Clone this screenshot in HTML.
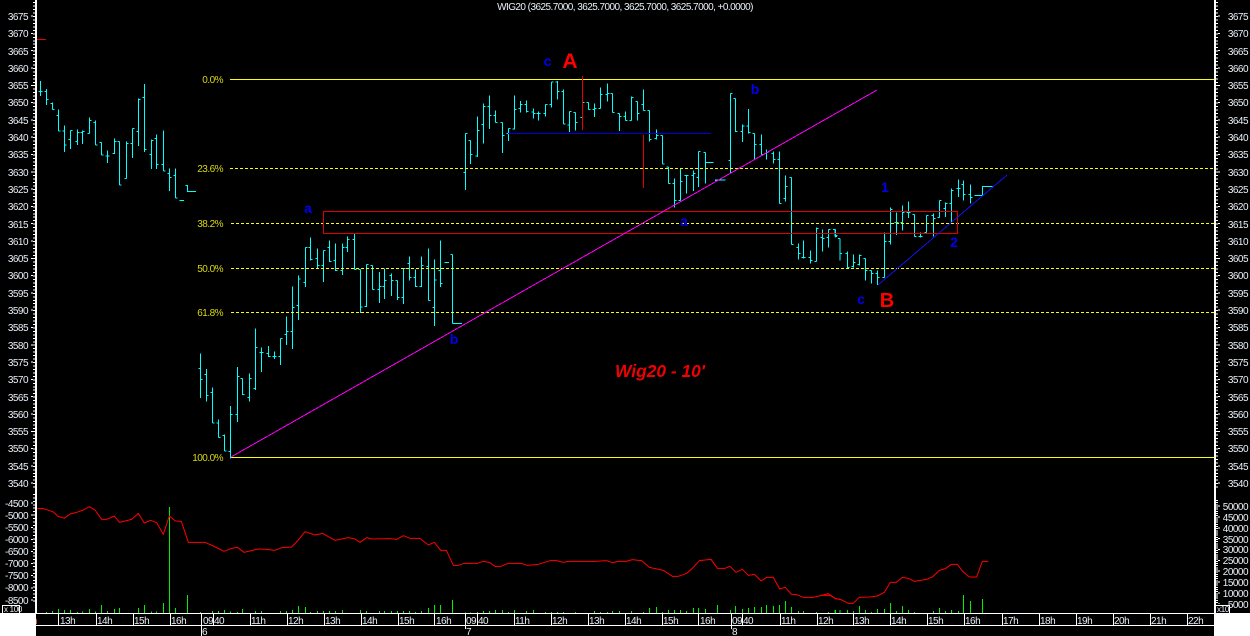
<!DOCTYPE html>
<html><head><meta charset="utf-8"><title>WIG20</title>
<style>
html,body{margin:0;padding:0;background:#000;width:1250px;height:636px;overflow:hidden}
svg{display:block}
text{font-family:"Liberation Sans",Arial,sans-serif}
.ax text,.tm text{font-size:10px;letter-spacing:-.52px;fill:#eaf1f8}
.ax .l{text-anchor:end}
.fib text{font-size:10px;letter-spacing:-.52px;fill:#d8d810;text-anchor:end}
.an text{font-weight:bold;text-anchor:middle;font-size:14px;fill:#0000f0}
</style></head><body>
<svg width="1250" height="636" viewBox="0 0 1250 636" xmlns="http://www.w3.org/2000/svg">
<rect width="1250" height="636" fill="#000"/>

<!-- price bars -->
<g fill="none" stroke="#00ffff" stroke-width="3" shape-rendering="crispEdges">
<g transform="translate(.17,.17) scale(.33333)"><path d="M121 243V288M121 274h-6M121 274h6M139 267V315M139 274h-6M139 298h6M157 307V328M157 310h-6M157 328h6M175 328V392M175 346h-6M175 392h6M193 376V455M193 392h-6M193 434h6M211 391V447M211 418h-6M211 391h6M232 388V435M232 424h-6M232 397h6M247 391V432M247 397h-6M247 394h6M268 352V400M268 400h-6M268 361h6M286 361V434M286 367h-6M286 434h6M304 427V464M304 427h-6M304 464h6M322 451V489M322 467h-6M322 467h6M343 415V461M343 460h-6M343 424h6M358 424V554M358 424h-6M358 554h6M379 424V535M379 535h-6M379 430h6M397 385V473M397 430h-6M397 385h6M415 295V437M415 394h-6M415 298h6M433 252V455M433 292h-6M433 448h6M454 418V507M454 463h-6M454 421h6M469 403V507M469 415h-6M469 493h6M490 391V513M490 493h-6M490 512h6M508 505V572M508 520h-6M508 532h6M526 505V593M526 526h-6M526 593h6M538 601H552M556 556H562V574H588"/></g>
<g transform="translate(180.17,200.17) scale(.33333)"><path d="M61 460V594M61 505h-6M61 538h6M79 507V604M79 523h-6M79 586h6M97 562V668M97 577h-6M97 668h6M115 658V712M115 668h-6M115 712h6M133 703V752M133 706h-6M133 752h6M151 618V775M151 754h-6M151 643h6M172 501V665M172 643h-6M172 529h6M187 535V584M187 535h-6M187 583h6M208 520V604M208 592h-6M208 535h6M226 385V570M226 565h-6M226 442h6M244 442V516M244 457h-6M244 457h6M265 438V470M265 460h-6M265 469h6M283 454V477M283 469h-6M283 469h6M301 415V494M301 469h-6M301 415h6M319 349V435M319 403h-6M319 394h6M337 259V446M337 394h-6M337 322h6M355 226V359M355 316h-6M355 236h6M376 142V261M376 247h-6M376 142h6M391 112V181M391 142h-6M391 178h6M412 145V205M412 175h-6M412 196h6M430 151V246M430 196h-6M430 151h6M448 121V185M448 142h-6M448 184h6M466 130V212M466 181h-6M466 211h6M487 130V224M487 211h-6M487 142h6M502 109V155M502 142h-6M502 118h6M523 100V208M523 118h-6M523 208h6M541 208V338M541 208h-6M541 320h6M559 193V320M559 319h-6M559 193h6M577 196V268M577 196h-6M577 268h6M598 216V308M598 268h-6M598 259h6M613 205V296M613 259h-6M613 241h6M634 220V287M634 226h-6M634 241h6M652 241V299M652 241h-6M652 292h6M670 205V311M670 292h-6M670 205h6M688 169V241M688 190h-6M688 232h6M706 208V260M706 232h-6M706 259h6M724 169V260M724 259h-6M724 196h6M745 145V301M745 199h-6M745 301h6M763 178V377M763 322h-6M763 240h6M781 121V260M781 211h-6M781 250h6M793 187H806M817 163V370M817 163h-6M817 370H845"/></g>
<g transform="translate(420.17,.17) scale(.33333)"><path d="M136 400V569M136 517h-6M136 400h6M151 421V492M151 421h-6M151 463h6M172 349V470M172 468h-6M172 391h6M190 310V430M190 373h-6M190 319h6M208 286V387M208 319h-6M208 346h6M226 331V367M226 346h-6M226 367h6M247 367V458M247 367h-6M247 406h6M265 385V423M265 400h-6M265 385h6M283 286V388M283 387h-6M283 328h6M301 303V337M301 325h-6M301 313h6M319 301V337M319 313h-6M319 334h6M340 325V355M340 336h-6M340 340h6M355 334V361M355 340h-6M355 340h6M376 313V349M376 340h-6M376 313h6M394 246V322M394 313h-6M394 246h6M412 243V298M412 246h-6M412 274h6M430 268V371M430 274h-6M430 371h6M448 334V395M448 374h-6M448 334h6M466 337V391M466 337h-6M466 367h6M487 352h-6M487 307h6M505 307V328M505 307h-6M505 328h6M523 310V350M523 328h-6M523 325h6M541 262V325M541 325h-6M541 283h6M562 250V304M562 283h-6M562 280h6M577 280V337M577 280h-6M577 337h6M598 340V392M598 340h-6M598 349h6M616 334V361M616 349h-6M616 361h6M634 289V361M634 361h-6M634 292h6M652 304V361M652 304h-6M652 340h6M670 268V331M670 313h-6M670 331h6M688 331V424M688 331h-6M688 418h6M709 388V418M709 415h-6M709 406h6M727 406V491M727 406h-6M727 491h6M745 500V550M745 500h-6M745 550h6M763 535V622M763 550h-6M763 601h6M781 505V601M781 601h-6M781 544h6M799 526V580M799 526h-6M799 526h6M820 511V572M820 526h-6M820 520h6M835 454V560M835 532h-6M835 454h6M856 457V550M856 457h-6M856 487H880M886 540H916M886 538V543M931 280V520M931 481h-6M931 280h6M946 295V395M946 295h-6M946 394h6M967 373V426M967 394h-6M967 377h6M985 327V400M985 377h-6M985 397h6M1003 400V478M1003 400h-6M1003 433h6M1024 403V463M1024 433h-6M1024 463h6M1039 448V478M1039 460h-6M1039 457h6M1060 454V490M1060 460h-6M1060 478h6M1078 454V610M1078 478h-6M1078 610h6M1096 526V604M1096 595h-6M1096 559h6M1114 532V733M1114 532h-6M1114 733h6M1135 730V778M1135 742h-6M1135 760h6M1150 721V775M1150 772h-6M1150 772h6M1171 751V790M1171 772h-6M1171 781h6M1189 682V784M1189 784h-6M1189 685h6M1207 688V754M1207 712h-6M1207 715h6M1225 688V742M1225 712h-6M1225 688h6M1246 688V712M1246 688h-6M1246 706h6"/></g>
<g transform="translate(830.17,.17) scale(.33333)"><path d="M15 688V709M15 688h-6M15 709h6M30 715V781M30 715h-6M30 760h6M52 754V805M52 760h-6M52 802h6M70 763V802M70 799h-6M70 787h6M88 763V796M88 793h-6M88 766h6M106 775V841M106 775h-6M106 811h6M124 811V850M124 811h-6M124 820h6M142 811V855M142 820h-6M142 832h6M163 697V832M163 832h-6M163 724h6M181 622V733M181 724h-6M181 628h6M199 637V704M199 667h-6M199 667h6M217 616V691M217 667h-6M217 637h6M235 604V654M235 637h-6M235 637h6M253 643V709M253 643h-6M253 709h6M271 697V712M271 709h-6M271 709h6M289 646V697M289 697h-6M289 646h6M310 640V709M310 646h-6M310 655h6M328 601V652M328 652h-6M328 601h6M346 607V651M346 625h-6M346 610h6M364 565V667M364 610h-6M364 571h6M385 538V590M385 565h-6M385 565h6M400 541V601M400 553h-6M400 583h6M421 553V610M421 583h-6M421 592h6M433 586H457V559H487"/></g>
</g>

<!-- fibonacci lines -->
<g fill="none" stroke="#ffff00" stroke-width="1" shape-rendering="crispEdges">
<path d="M230 79.5H1214M231 457.5H1214"/>
<path stroke-dasharray="3 2" d="M230 168.5H1214M231 223.5H1214M231 268.5H1214M231 312.5H1214"/>
</g>
<g class="fib">
<text x="223" y="83">0.0%</text>
<text x="223" y="172">23.6%</text>
<text x="223" y="227">38.2%</text>
<text x="223" y="272">50.0%</text>
<text x="223" y="316">61.8%</text>
<text x="223" y="461">100.0%</text>
</g>

<!-- rectangle, trend lines, markers -->
<rect x="323.5" y="211.5" width="634" height="22" fill="none" stroke="#e00000" stroke-width="1" shape-rendering="crispEdges"/>
<g fill="none" stroke-width="1" shape-rendering="crispEdges">
<path d="M231 457L877 90" stroke="#ff00ff"/>
<path d="M878 285L1007 175" stroke="#1010f0"/>
<path d="M508 133.5H711" stroke="#0000e0"/>
<path d="M582.5 76V130M643.5 135V188M37 39.5H46" stroke="#e80000"/>
</g>

<!-- annotations -->
<g class="an">
<text x="308" y="213">a</text>
<text x="547.5" y="66">c</text>
<text x="570" y="68" style="font-size:21px;fill:#ff0000">A</text>
<text x="755" y="94">b</text>
<text x="684" y="226">a</text>
<text x="454" y="344">b</text>
<text x="885" y="192">1</text>
<text x="954" y="247">2</text>
<text x="861" y="304">c</text>
<text x="887" y="307" style="font-size:20px;fill:#ff0000">B</text>
</g>
<text x="615" y="377" style="font-size:17.4px;font-weight:bold;font-style:italic;fill:#f00000">Wig20 - 10'</text>

<text x="625" y="10" text-anchor="middle" style="font-size:10px;letter-spacing:-.55px;fill:#eaf1f8">WIG20 (3625.7000, 3625.7000, 3625.7000, 3625.7000, +0.0000)</text>

<!-- lower panel: volume -->
<g fill="none" stroke="#00ee00" stroke-width="3" shape-rendering="crispEdges">
<g transform="translate(.17,490.17) scale(.33333)"><path d="M139 365V369M157 362V369M175 357V369M193 360V369M211 360V369M232 366V369M247 364V369M268 357V369M286 364V369M304 345V369M322 363V369M343 357V369M358 354V369M415 354V369M433 345V369M454 364V369M469 364V369M490 339V369M508 51V369M526 354V369M562 315V369M601 366V369M637 363V369M655 363V369M673 360V369M691 364V369M712 366V369M727 357V369M766 363V369M784 363V369M841 363V369M859 363V369M877 360V369M895 348V369M916 351V369M931 366V369M952 363V369M970 363V369M988 363V369M1006 363V369M1027 360V369M1081 360V369M1099 363V369M1138 363V369M1153 363V369M1174 363V369M1192 363V369M1210 363V369M1228 363V369M1246 366V369"/></g>
<g transform="translate(420.17,490.17) scale(.33333)"><path d="M4 363V369M25 354V369M43 345V369M61 345V369M97 330V369M136 367V369M151 367V369M172 366V369M190 363V369M208 363V369M226 360V369M247 360V369M265 366V369M283 360V369M319 363V369M340 360V369M376 366V369M394 366V369M412 366V369M430 366V369M466 366V369M523 363V369M541 366V369M562 366V369M577 363V369M598 363V369M634 363V369M670 366V369M688 354V369M709 351V369M727 366V369M745 360V369M763 360V369M781 360V369M799 363V369M820 354V369M835 354V369M856 357V369M892 345V369M931 360V369M946 348V369M967 357V369M985 354V369M1003 351V369M1024 351V369M1039 345V369M1060 348V369M1078 345V369M1096 333V369M1114 351V369M1135 363V369M1150 363V369M1189 366V369M1225 366V369M1246 360V369"/></g>
<g transform="translate(830.17,490.17) scale(.33333)"><path d="M15 360V369M30 360V369M52 360V369M70 363V369M88 348V369M106 360V369M124 366V369M142 357V369M163 357V369M181 339V369M199 363V369M217 348V369M235 360V369M253 366V369M310 363V369M328 354V369M346 363V369M364 360V369M385 363V369M400 315V369M421 333V369M457 327V369"/></g>
</g>

<!-- lower panel: red line -->
<g fill="none" stroke="#ff0000" stroke-width="3" stroke-linejoin="round">
<polyline transform="translate(0,490) scale(.33333)" points="110,55 130,56 150,62 160,66 175,80 185,82 193,85 210,72 230,67 250,60 268,50 285,60 305,88 320,88 343,78 358,97 375,93 395,88 415,70 433,99 452,91 470,98 490,133 508,78 526,93 544,94 565,157 615,157 640,168 672,184 695,175 712,172 732,187 750,183 775,177 800,178 825,181 845,173 875,171 895,150 915,125 945,135 968,130 985,140 1005,151 1030,146 1045,143 1065,147 1080,157 1100,143 1115,147 1170,146 1190,148 1210,137 1230,145 1260,145"/>
<polyline transform="translate(420,490) scale(.33333)" points="0,145 25,165 43,157 62,181 79,181 100,226 115,226 133,220 172,220 190,214 208,217 225,229 243,229 265,220 303,220 322,226 355,223 390,212 410,212 430,217 445,214 525,214 560,212 578,218 595,214 618,214 637,209 665,212 688,232 730,241 757,259 775,259 800,250 820,232 838,212 873,208 892,235 915,235 930,229 948,247 967,238 985,256 1003,253 1024,273 1040,262 1060,262 1079,297 1096,292 1114,313 1130,314 1150,322 1178,322 1198,318 1225,311 1246,326 1260,328"/>
<polyline transform="translate(830,490) scale(.33333)" points="-30,316 0,316 15,325 33,329 55,340 70,340 88,322 120,321 142,318 163,307 181,277 199,277 217,262 235,265 253,274 290,268 307,261 328,241 346,236 364,223 382,223 398,244 418,261 440,261 457,214 475,214"/>
</g>

<!-- partial hour label hidden behind the white corner block -->
<text x="32" y="624" style="font-size:10px;fill:#d07030">h</text>

<!-- axes -->
<g fill="none" stroke="#fff" shape-rendering="crispEdges">
<rect x="35" y="0" width="2" height="613" fill="#fff" stroke="none"/>
<rect x="1214" y="0" width="2" height="613" fill="#fff" stroke="none"/>
<path stroke-width="1" stroke-dasharray="1 2.46" d="M34.5 2.2V490M33.5 2.2V490"/>
<path stroke-width="1" stroke-dasharray="1 16.3" d="M32.5 15.6V490M31.5 15.6V490"/>
<path stroke-width="1" stroke-dasharray="1 2.43" d="M34.5 494V604M33.5 494V604"/>
<path stroke-width="1" stroke-dasharray="1 11.1" d="M32.5 502.6V604M31.5 502.6V604"/>
<path stroke-width="1" stroke-dasharray="1 2.46" d="M1216.5 2.2V490M1217.5 2.2V490"/>
<path stroke-width="1" stroke-dasharray="1 16.3" d="M1218.5 15.6V490M1219.5 15.6V490"/>
<path stroke-width="1" stroke-dasharray="1 1.17" d="M1216.5 500V604M1217.5 500V604"/>
<path stroke-width="1" stroke-dasharray="1 9.85" d="M1218.5 505.6V604M1219.5 505.6V604"/>
</g>

<g class="ax">
<g class="l">
<text class="l" x="28" y="20">3675</text><text class="l" x="28" y="37">3670</text><text class="l" x="28" y="55">3665</text><text class="l" x="28" y="72">3660</text><text class="l" x="28" y="89">3655</text><text class="l" x="28" y="106">3650</text><text class="l" x="28" y="124">3645</text><text class="l" x="28" y="141">3640</text><text class="l" x="28" y="158">3635</text><text class="l" x="28" y="176">3630</text><text class="l" x="28" y="193">3625</text><text class="l" x="28" y="210">3620</text><text class="l" x="28" y="228">3615</text><text class="l" x="28" y="245">3610</text><text class="l" x="28" y="262">3605</text><text class="l" x="28" y="279">3600</text><text class="l" x="28" y="297">3595</text><text class="l" x="28" y="314">3590</text><text class="l" x="28" y="331">3585</text><text class="l" x="28" y="349">3580</text><text class="l" x="28" y="366">3575</text><text class="l" x="28" y="383">3570</text><text class="l" x="28" y="401">3565</text><text class="l" x="28" y="418">3560</text><text class="l" x="28" y="435">3555</text><text class="l" x="28" y="452">3550</text><text class="l" x="28" y="470">3545</text><text class="l" x="28" y="487">3540</text>
<text class="l" x="28" y="507">-4500</text><text class="l" x="28" y="519">-5000</text><text class="l" x="28" y="531">-5500</text><text class="l" x="28" y="543">-6000</text><text class="l" x="28" y="555">-6500</text><text class="l" x="28" y="567">-7000</text><text class="l" x="28" y="579">-7500</text><text class="l" x="28" y="591">-8000</text><text class="l" x="28" y="604">-8500</text>
<text class="l" x="1248" y="20">3675</text><text class="l" x="1248" y="37">3670</text><text class="l" x="1248" y="55">3665</text><text class="l" x="1248" y="72">3660</text><text class="l" x="1248" y="89">3655</text><text class="l" x="1248" y="106">3650</text><text class="l" x="1248" y="124">3645</text><text class="l" x="1248" y="141">3640</text><text class="l" x="1248" y="158">3635</text><text class="l" x="1248" y="176">3630</text><text class="l" x="1248" y="193">3625</text><text class="l" x="1248" y="210">3620</text><text class="l" x="1248" y="228">3615</text><text class="l" x="1248" y="245">3610</text><text class="l" x="1248" y="262">3605</text><text class="l" x="1248" y="279">3600</text><text class="l" x="1248" y="297">3595</text><text class="l" x="1248" y="314">3590</text><text class="l" x="1248" y="331">3585</text><text class="l" x="1248" y="349">3580</text><text class="l" x="1248" y="366">3575</text><text class="l" x="1248" y="383">3570</text><text class="l" x="1248" y="401">3565</text><text class="l" x="1248" y="418">3560</text><text class="l" x="1248" y="435">3555</text><text class="l" x="1248" y="452">3550</text><text class="l" x="1248" y="470">3545</text><text class="l" x="1248" y="487">3540</text>
<text class="l" x="1248" y="510">50000</text><text class="l" x="1248" y="521">45000</text><text class="l" x="1248" y="532">40000</text><text class="l" x="1248" y="543">35000</text><text class="l" x="1248" y="553">30000</text><text class="l" x="1248" y="564">25000</text><text class="l" x="1248" y="575">20000</text><text class="l" x="1248" y="586">15000</text><text class="l" x="1248" y="597">10000</text><text class="l" x="1248" y="608">5000</text>
</g>
</g>

<!-- time bar -->
<rect x="0" y="613" width="36" height="23" fill="#fff"/>
<rect x="1214" y="613" width="36" height="23" fill="#fff"/>
<rect x="2.5" y="605.5" width="17" height="8" fill="#000" stroke="#fff" shape-rendering="crispEdges"/>
<rect x="1215.5" y="605.5" width="14" height="8" fill="#000" stroke="#fff" shape-rendering="crispEdges"/>
<text x="4" y="612" style="font-size:8px;letter-spacing:-.3px;fill:#eaf1f8">x 100</text>
<text x="1217" y="612" style="font-size:8px;letter-spacing:-.3px;fill:#eaf1f8">x10</text>
<g fill="none" stroke="#fff" stroke-width="1" shape-rendering="crispEdges">
<path d="M36 613.5H1214M36 625.5H1214"/>
<path d="M58.5 613V625M96.5 613V625M133.5 613V625M170.5 613V625M201.5 613V636M213.5 613V625M250.5 613V625M287.5 613V625M324.5 613V625M361.5 613V625M398.5 613V625M434.5 613V625M465.5 613V629M477.5 613V625M514.5 613V625M551.5 613V625M588.5 613V625M625.5 613V625M662.5 613V625M698.5 613V625M731.5 613V629M742.5 613V625M780.5 613V625M817.5 613V625M853.5 613V625M890.5 613V625M927.5 613V625M964.5 613V625M1002.5 613V625M1039.5 613V625M1076.5 613V625M1113.5 613V625M1150.5 613V625M1187.5 613V625"/>
</g>
<g class="tm">
<text x="60" y="624">13h</text><text x="97" y="624">14h</text><text x="134" y="624">15h</text><text x="171" y="624">16h</text><text x="203" y="624">09</text><text x="214" y="624">40</text><text x="251" y="624">11h</text><text x="288" y="624">12h</text><text x="325" y="624">13h</text><text x="362" y="624">14h</text><text x="399" y="624">15h</text><text x="436" y="624">16h</text><text x="466" y="624">09</text><text x="478" y="624">40</text><text x="515" y="624">11h</text><text x="552" y="624">12h</text><text x="589" y="624">13h</text><text x="626" y="624">14h</text><text x="663" y="624">15h</text><text x="700" y="624">16h</text><text x="732" y="624">09</text><text x="743" y="624">40</text><text x="781" y="624">11h</text><text x="818" y="624">12h</text><text x="854" y="624">13h</text><text x="891" y="624">14h</text><text x="928" y="624">15h</text><text x="965" y="624">16h</text><text x="1003" y="624">17h</text><text x="1040" y="624">18h</text><text x="1077" y="624">19h</text><text x="1114" y="624">20h</text><text x="1151" y="624">21h</text><text x="1188" y="624">22h</text>
<text x="202" y="635">6</text><text x="466" y="635">7</text><text x="732" y="635">8</text>
</g>
</svg>
</body></html>
